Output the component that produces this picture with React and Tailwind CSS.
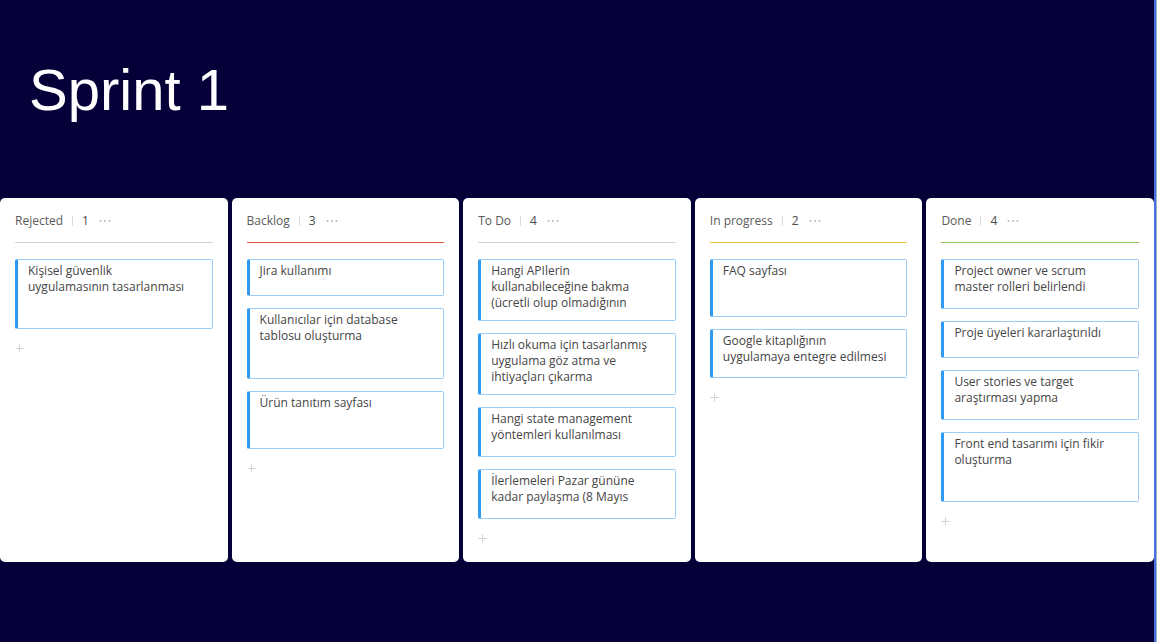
const columns = [
  {
    title: 'Rejected',
    line: 'mt-[13px] h-px bg-[#d4d4d4]',
    cards: [{ h: 'h-[70px]', lines: ['Kişisel güvenlik', 'uygulamasının tasarlanması'] }],
  },
  {
    title: 'Backlog',
    line: 'mt-[13px] h-px bg-[#e5533f]',
    cards: [
      { h: 'h-[37px]', lines: ['Jira kullanımı'] },
      { h: 'h-[71px]', lines: ['Kullanıcılar için database', 'tablosu oluşturma'] },
      { h: 'h-[58px]', lines: ['Ürün tanıtım sayfası'] },
    ],
  },
  {
    title: 'To Do',
    line: 'mt-[13px] h-px bg-[#d4d4d4]',
    cards: [
      { h: 'h-[62px]', lines: ['Hangi APIlerin', 'kullanabileceğine bakma', '(ücretli olup olmadığının'] },
      { h: 'h-[62px]', lines: ['Hızlı okuma için tasarlanmış', 'uygulama göz atma ve', 'ihtiyaçları çıkarma'] },
      { h: 'h-[50px]', lines: ['Hangi state management', 'yöntemleri kullanılması'] },
      { h: 'h-[50px]', lines: ['İlerlemeleri Pazar gününe', 'kadar paylaşma (8 Mayıs'] },
    ],
  },
  {
    title: 'In progress',
    line: 'mt-[13px] h-px bg-[#f3c332]',
    cards: [
      { h: 'h-[58px]', lines: ['FAQ sayfası'] },
      { h: 'h-[49px]', lines: ['Google kitaplığının', 'uygulamaya entegre edilmesi'] },
    ],
  },
  {
    title: 'Done',
    line: 'mt-[13px] h-px bg-[#8cc556]',
    cards: [
      { h: 'h-[50px]', lines: ['Project owner ve scrum', 'master rolleri belirlendi'] },
      { h: 'h-[37px]', lines: ['Proje üyeleri kararlaştırıldı'] },
      { h: 'h-[50px]', lines: ['User stories ve target', 'araştırması yapma'] },
      { h: 'h-[70px]', lines: ['Front end tasarımı için fikir', 'oluşturma'] },
    ],
  },
];

function Dots() {
  return (
    <svg width="12" height="4" viewBox="0 0 12 4" className="ml-[10px]">
      <circle cx="1.5" cy="2" r="1" fill="#b8b8b8" />
      <circle cx="6" cy="2" r="1" fill="#b8b8b8" />
      <circle cx="10.5" cy="2" r="1" fill="#b8b8b8" />
    </svg>
  );
}

function Plus() {
  return (
    <svg width="9" height="9" viewBox="0 0 9 9" className="mt-[15px]">
      <path d="M4.5 0.5v8M0.5 4.5h8" stroke="#d2d2d2" strokeWidth="1" />
    </svg>
  );
}

function Column({ col }) {
  return (
    <div className="bg-white rounded-[5px] h-[364px] px-[15px] pt-[15px]">
      <div className="flex items-center h-[16px] text-[12px] leading-[16px] text-[#5a5a5a]">
        <span>{col.title}</span>
        <span className="mx-[9px] w-px h-[10px] bg-[#dcdcdc]" />
        <span className="text-[#4a4a4a]">{col.cards.length}</span>
        <Dots />
      </div>
      <div className={col.line} />
      <div className="mt-[16px] flex flex-col gap-[12px]">
        {col.cards.map((c, i) => (
          <div
            key={i}
            className={`${c.h} overflow-hidden rounded-[2px] border border-[#9dcdf7] border-l-[3px] border-l-[#2e9af2] pl-[10px] pr-[8px] pt-[3px] text-[12px] leading-[16px] text-[#454545]`}
          >
            {c.lines.map((l, j) => (
              <div key={j} className="whitespace-nowrap">{l}</div>
            ))}
          </div>
        ))}
      </div>
      <Plus />
    </div>
  );
}

export default function App() {
  return (
    <div className="w-[1157px] h-[642px] border-r border-[#a4aecb] bg-[#060038]" style={{ fontFamily: '"Open Sans", "Noto Sans", sans-serif' }}>
      <div className="h-full border-r-2 border-[#4472df]">
        <div className="h-[198px] pl-[29px] pt-[61px]">
          <h1 className="text-white text-[58px] leading-none" style={{ fontFamily: '"Liberation Sans", Arial, sans-serif' }}>
            Sprint 1
          </h1>
        </div>
        <div className="grid grid-cols-5 gap-[4px]">
          {columns.map(col => (
            <Column key={col.title} col={col} />
          ))}
        </div>
      </div>
    </div>
  );
}
